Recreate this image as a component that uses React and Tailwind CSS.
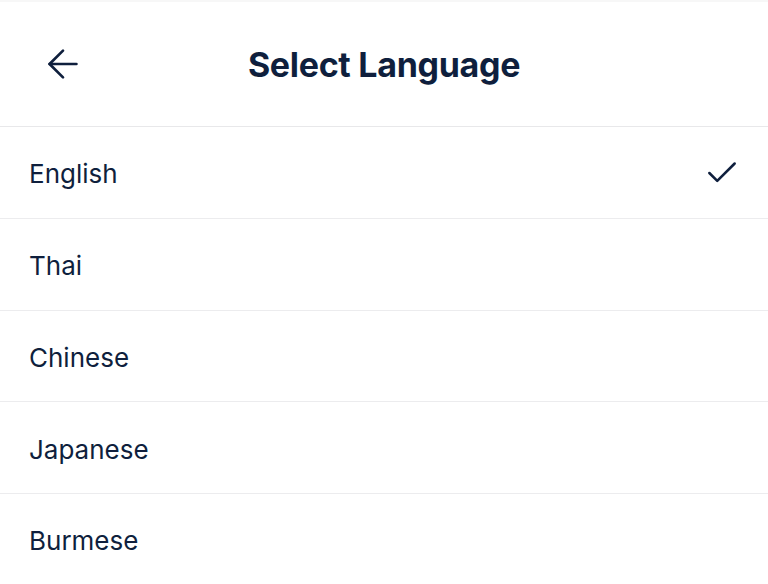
import { Check } from 'lucide-react'

const languages = ['English', 'Thai', 'Chinese', 'Japanese', 'Burmese']

function BackArrow() {
  return (
    <svg width="46" height="46" viewBox="0 0 24 24" fill="none" stroke="currentColor" strokeWidth="1.4" strokeLinecap="round" strokeLinejoin="round">
      <path d="M12 19 5 12l7-7" />
      <path d="M19 12H5" />
    </svg>
  )
}

export default function App() {
  const selected = 'English'

  return (
    <div className="w-[768px] h-[584px] overflow-hidden bg-white text-[#0f1f3d] font-['Inter',sans-serif]">
      <div className="h-[2px] bg-[#f7f7f7]" />
      {/* header */}
      <header className="relative h-[125px] flex items-center justify-center border-b border-[#e8e8ea]">
        <button className="absolute left-[40px] top-[39px] flex items-center justify-center">
          <BackArrow />
        </button>
        <h1 className="text-[34px] font-bold tracking-[-0.3px]">Select Language</h1>
      </header>

      <ul>
        {languages.map((lang) => (
          <li key={lang} className="h-[91.75px] flex items-center justify-between pl-[29px] pr-[27px] pt-[4px] border-b border-[#ececee]">
            <span className="text-[26px] leading-none">{lang}</span>
            {lang === selected && <Check size={38} strokeWidth={1.6} className="-mt-[3px]" />}
          </li>
        ))}
      </ul>
    </div>
  )
}
